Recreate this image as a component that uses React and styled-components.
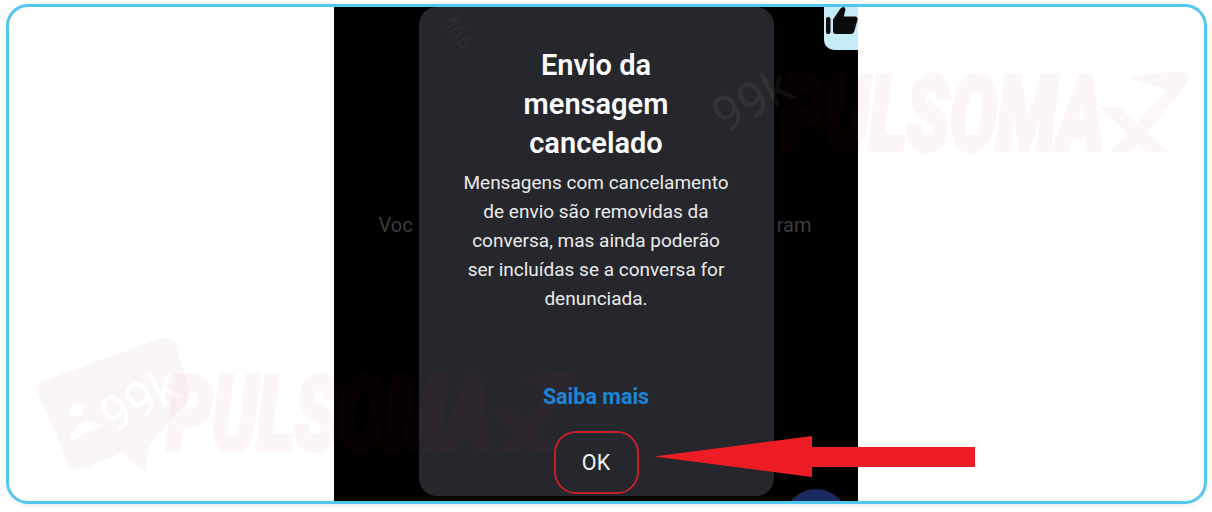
import styled, { createGlobalStyle } from "styled-components";

const GlobalStyle = createGlobalStyle`
	html, body {
		margin: 0;
		padding: 0;
		background: #fff;
	}
	body {
		font-family: Roboto, "Liberation Sans", sans-serif;
	}
`;

const Page = styled.div`
	width: 1212px;
	height: 512px;
	padding: 4px 5px 8px 6px;
	box-sizing: border-box;
	overflow: hidden;
`;

const Frame = styled.main`
	position: relative;
	height: 100%;
	box-sizing: border-box;
	display: flex;
	justify-content: center;
	border: 3px solid #52c7ef;
	border-radius: 22px;
	box-shadow: 0 2px 4px rgba(0, 0, 0, 0.08);
	overflow: hidden;
	background: #fff;
`;

const Phone = styled.section`
	position: relative;
	width: 524px;
	margin-right: 22px;
	background: #000;
	overflow: hidden;
	display: flex;
	flex-direction: column;
	align-items: stretch;
`;

const ReactionCell = styled.div`
	align-self: flex-end;
	width: 34px;
	height: 43px;
	display: flex;
	justify-content: flex-end;
	background: #c6ecf8;
	border-bottom-left-radius: 10px;
`;

const StatusLine = styled.p`
	display: flex;
	justify-content: space-between;
	margin: 161px 46px 0 45px;
	font-size: 20px;
	line-height: 28px;
	color: #3c3c3e;
`;

const SendButton = styled.div`
	position: absolute;
	left: 450px;
	top: 482px;
	width: 64px;
	height: 64px;
	border-radius: 50%;
	background: #1b2b60;
`;

const Dialog = styled.div`
	position: absolute;
	left: 85px;
	top: 0;
	width: 355px;
	height: 489px;
	box-sizing: border-box;
	padding-top: 39px;
	display: flex;
	flex-direction: column;
	align-items: center;
	background: #26272c;
	border-radius: 18px;
	text-align: center;
`;

const Title = styled.h1`
	margin: 0;
	width: 200px;
	font-size: 29px;
	font-weight: 600;
	line-height: 39px;
	color: #fbfbfb;
`;

const Message = styled.p`
	margin: 5px 0 0;
	width: 275px;
	font-size: 19px;
	line-height: 29px;
	color: #eaeaea;
`;

const LearnMore = styled.a`
	margin-top: 70px;
	font-size: 21.5px;
	font-weight: 700;
	line-height: 28px;
	color: #1a86d9;
`;

const OkButton = styled.button`
	margin-top: 20px;
	width: 85px;
	height: 63px;
	box-sizing: border-box;
	border: 2px solid #c4202b;
	border-radius: 22px;
	background: transparent;
	font-family: inherit;
	font-size: 21.5px;
	color: #f2f2f2;
`;

const ArrowIcon = styled.svg`
	position: absolute;
	left: 645px;
	top: 429px;
`;

const Mark = styled.div`
	position: absolute;
	left: ${({ $left }) => $left}px;
	top: ${({ $top }) => $top}px;
	width: 560px;
	height: 150px;
	pointer-events: none;
`;

const MarkWord = styled.span`
	position: absolute;
	left: 129px;
	top: 28px;
	font-size: 104px;
	font-weight: 900;
	font-style: italic;
	line-height: 104px;
	white-space: nowrap;
	color: #e1284a;
	-webkit-text-stroke: 5px #e1284a;
	opacity: 0.035;
	transform: scaleX(0.68);
	transform-origin: left center;
`;

const MarkGlyph = styled.svg`
	position: absolute;
	left: 0;
	top: 0;
	overflow: visible;
`;

const StrayMark = styled.span`
	position: absolute;
	left: 22px;
	top: 12px;
	font-size: 22px;
	color: rgba(255, 255, 255, 0.05);
	transform: rotate(-120deg);
`;

const ThumbIcon = () => (
	<svg width="32" height="30" viewBox="0 0 32 30" fill="#0b0b0b">
		<rect x="0" y="10" width="4.5" height="17" rx="2" />
		<path d="M7 12.5 13.5 3c1-1.6 2.6-3 3.8-3 1.6 0 2.4 1.4 2 3.2L17.8 9.5h11.6c1.6 0 2.6 1.4 2.2 3l-3.2 11.6c-.5 1.8-1.8 2.9-3.6 2.9H10c-1.700 0-3-1.300-3-3z" />
	</svg>
);

const Arrow = () => (
	<ArrowIcon width="325" height="42" viewBox="0 0 325 42">
		<path d="M0 20.500 158 0V11H321V31H158V41Z" fill="#ee1c25" />
	</ArrowIcon>
);

const Watermark = ({ left, top, dark }) => (
	<Mark $left={left} $top={top}>
		<MarkGlyph width="150" height="145" viewBox="0 0 150 145">
			{!dark && (
				<path
					d="M6 46 120 4c9-3 15-1 18 7l13 42c2 8 0 14-7 19l-32 36-5 30-23-20-38 15c-8 3-14 0-17-7L1 60c-3-7-1-11 5-14Z"
					fill="rgba(190,130,155,0.07)"
				/>
			)}
			<g fill={dark ? "rgba(255,255,255,0.05)" : "#fff"}>
				{!dark && <circle cx="39" cy="75" r="7" />}
				{!dark && <path d="M32 106c2-12 10-20 18-20 7 0 12 3 17 5-12 2-24 9-35 15Z" />}
				<text x="74" y="100" fontFamily="Roboto, sans-serif" fontSize="50" transform="rotate(-28 74 100)">
					99k
				</text>
			</g>
		</MarkGlyph>
		<MarkGlyph width="560" height="150" viewBox="0 0 560 150" opacity="0.035">
			<g fill="#e1284a" transform="translate(-9 -7)">
				<path d="M459 79h19l49 45h-22z" />
				<path d="M469 124 526 62c-12-4-24-6-37-12 18-4 42-7 51-6 8 1 8 6 6 12l-56 68z" />
			</g>
		</MarkGlyph>
		<MarkWord>PULSOMA</MarkWord>
	</Mark>
);

export default function App() {
	return (
		<>
			<GlobalStyle />
			<Page>
				<Frame>
					<Phone>
						<ReactionCell>
							<ThumbIcon />
						</ReactionCell>
						<StatusLine>
							<span>Voc</span>
							<span>ram</span>
						</StatusLine>
						<SendButton />
						<Dialog>
							<StrayMark>99k</StrayMark>
							<Title>Envio da mensagem cancelado</Title>
							<Message>
								Mensagens com cancelamento de envio são removidas da conversa, mas ainda poderão ser incluídas se a
								conversa for denunciada.
							</Message>
							<LearnMore>Saiba mais</LearnMore>
							<OkButton>OK</OkButton>
						</Dialog>
					</Phone>
					<Arrow />
					<Watermark left={29} top={328} />
					<Watermark left={641} top={28} dark />
				</Frame>
			</Page>
		</>
	);
}
